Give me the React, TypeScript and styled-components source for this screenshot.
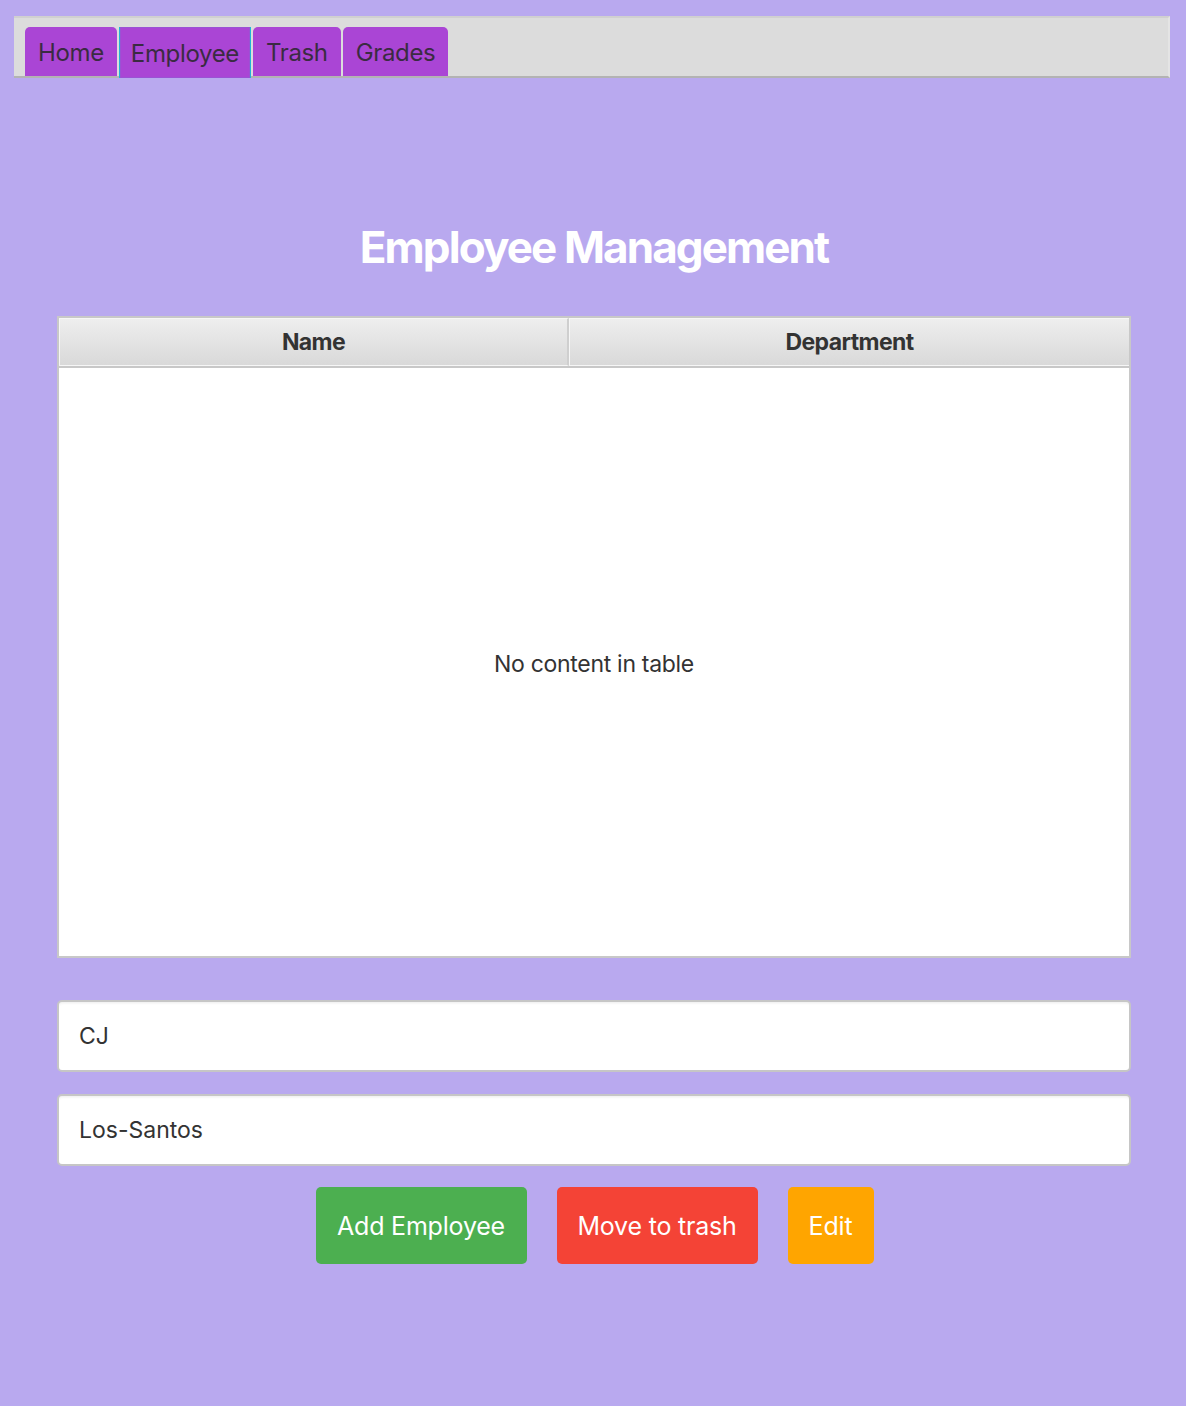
import React from "react";
import styled, { createGlobalStyle } from "styled-components";

const Global = createGlobalStyle`
  html, body { margin: 0; padding: 0; background: #b9a9ef; }
  body { font-family: Inter, "Noto Sans", "Liberation Sans", sans-serif; }
  * { box-sizing: border-box; }
`;

const Page = styled.div`
  width: 1186px;
  height: 1406px;
  padding: 16px 16px 0 14px;
  display: flex;
  flex-direction: column;
`;

const TabBar = styled.div`
  height: 62px;
  background: #dcdcdc;
  border-top: 2px solid #d0d0d0;
  border-right: 2px solid #e4e4e4;
  border-bottom: 2px solid #b3b3b3;
  display: flex;
  align-items: flex-end;
  padding-left: 11px;
  gap: 2px;
`;

const Tab = styled.div<{ $active?: boolean }>`
  height: 49px;
  padding: 2px ${(p) => (p.$active ? "11px" : "13px")} 0;
  background: #aa45d5;
  border-radius: 5px 5px 0 0;
  color: #3a2b42;
  font-size: 24px;
  display: flex;
  align-items: center;
  letter-spacing: -0.35px;
  ${(p) =>
    p.$active &&
    `
    border-radius: 0;
    border-left: 1px solid #1fb3d8;
    border-right: 1px solid #1fb3d8;
    box-shadow: inset 0 0 0 1px #9a52d4;
    margin-bottom: -2px;
    height: 51px;
  `}
`;

const Main = styled.div`
  padding: 0 39px 0 43px;
  display: flex;
  flex-direction: column;
`;

const Title = styled.h1`
  margin: 141px 0 0;
  height: 97px;
  text-align: center;
  color: #ffffff;
  font-size: 44px;
  font-weight: 700;
  letter-spacing: -1.9px;
  line-height: 56px;
`;

const Table = styled.div`
  height: 642px;
  background: #fff;
  border: 2px solid #c8c8c8;
  display: flex;
  flex-direction: column;
`;

const HeaderRow = styled.div`
  display: flex;
  height: 50px;
  border-bottom: 2px solid #c8c8c8;
`;

const HeaderCell = styled.div<{ $w?: number }>`
  ${(p) => (p.$w ? `width: ${p.$w}px;` : "flex: 1;")}
  background: linear-gradient(#eeeeee, #d9d9d9);
  border: 1px solid #f6f6f6;
  border-right: 2px solid #cfcfcf;
  display: flex;
  align-items: center;
  justify-content: center;
  font-size: 23px;
  font-weight: 700;
  letter-spacing: -0.6px;
  color: #333;
  &:last-child { border-right: none; }
`;

const Empty = styled.div`
  flex: 1;
  display: flex;
  align-items: center;
  justify-content: center;
  font-size: 23px;
  color: #333;
  letter-spacing: -0.3px;
  padding-top: 4px;
`;

const Input = styled.div<{ $top: number }>`
  margin-top: ${(p) => p.$top}px;
  height: 72px;
  background: #fff;
  border: 2px solid #c6c6c6;
  border-radius: 5px;
  box-shadow: inset 0 3px 3px -2px rgba(0, 0, 0, 0.08);
  display: flex;
  align-items: center;
  padding: 0 20px;
  font-size: 23px;
  color: #333;
`;

const Buttons = styled.div`
  margin-top: 21px;
  display: flex;
  justify-content: center;
  gap: 30px;
  padding-left: 1px;
`;

const Button = styled.div<{ $bg: string; $w: number }>`
  width: ${(p) => p.$w}px;
  height: 77px;
  background: ${(p) => p.$bg};
  border-radius: 5px;
  color: #fff;
  font-size: 25px;
  letter-spacing: -0.2px;
  display: flex;
  align-items: center;
  justify-content: center;
`;

export default function App() {
  return (
    <>
      <Global />
      <Page>
        <TabBar>
          <Tab>Home</Tab>
          <Tab $active>Employee</Tab>
          <Tab>Trash</Tab>
          <Tab>Grades</Tab>
        </TabBar>
        <Main>
          <Title>Employee Management</Title>
          <Table>
            <HeaderRow>
              <HeaderCell $w={510}>Name</HeaderCell>
              <HeaderCell>Department</HeaderCell>
            </HeaderRow>
            <Empty>No content in table</Empty>
          </Table>
          <Input $top={42}>CJ</Input>
          <Input $top={22}>Los-Santos</Input>
          <Buttons>
            <Button $bg="#4caf50" $w={211}>Add Employee</Button>
            <Button $bg="#f44336" $w={201}>Move to trash</Button>
            <Button $bg="#ffa500" $w={86}>Edit</Button>
          </Buttons>
        </Main>
      </Page>
    </>
  );
}
